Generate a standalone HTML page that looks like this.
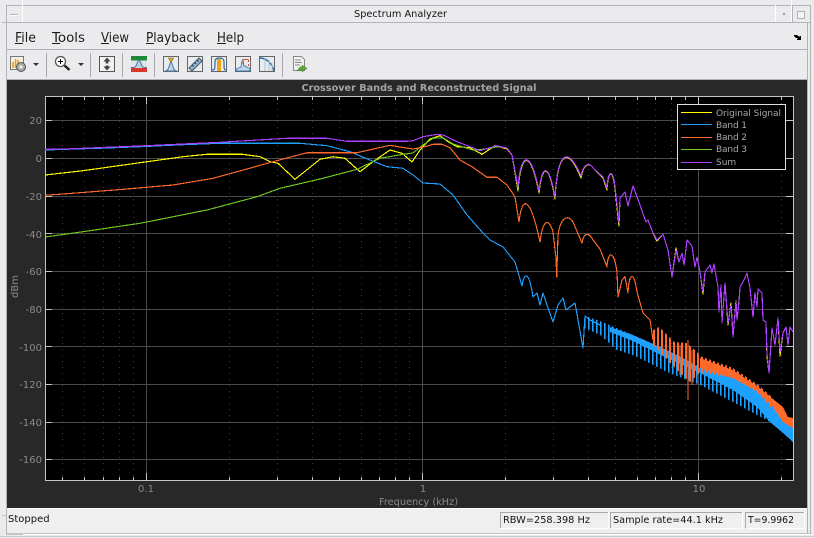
<!DOCTYPE html>
<html><head><meta charset="utf-8"><title>Spectrum Analyzer</title>
<style>
html,body{margin:0;padding:0;width:814px;height:538px;overflow:hidden;background:#ebebee}
svg{display:block}
text{font-family:"DejaVu Sans","Liberation Sans",sans-serif}
.t{fill:#8a8a8a;font-size:10px}
.m{fill:#1c1c1c;font-size:13px}
.l{fill:#a8a8a8;font-size:9px}
.s{fill:#111;font-size:10px}
</style></head><body>
<svg width="814" height="538" viewBox="0 0 814 538" xmlns="http://www.w3.org/2000/svg">
<defs>
<pattern id="pb" width="4" height="10" patternUnits="userSpaceOnUse"><rect width="1.6" height="10" fill="#1ea0ff"/></pattern>
<pattern id="po" width="4" height="10" patternUnits="userSpaceOnUse"><rect x="1" width="2" height="10" fill="#ff6a2b"/></pattern>
</defs>
<rect width="814" height="538" fill="#ebebee"/>
<!-- window frame -->
<g shape-rendering="crispEdges" fill="none">
<path d="M6 5.500H810M2 22.500H810M6.500 5V534M807.500 22V533M810.500 5V534" stroke="#b4b4b8"/>
<path d="M22.500 0V22M775.500 5V22M791.500 0V22" stroke="#fff"/>
<path d="M792.500 5V22" stroke="#b4b4b8"/>
<rect x="797.500" y="11.500" width="7" height="7" fill="#f4f4f4" stroke="#b0b0b0"/>
<path d="M10 14.500H18" stroke="#b4b4b8"/><path d="M10 15.500H18" stroke="#fff"/>
<rect x="783" y="13" width="2" height="2" fill="#999" stroke="none"/>
<path d="M7 49.500H807M7 79.500H807" stroke="#b0b0b4"/>
<path d="M46.500 53V77M90.500 53V77M122.500 53V77M154.500 53V77M282.500 53V77" stroke="#a8a8ac"/>
</g>
<text x="354" y="17" font-size="10" fill="#111" textLength="93" lengthAdjust="spacingAndGlyphs">Spectrum Analyzer</text>
<!-- menu -->
<text class="m" x="15" y="42" textLength="21" lengthAdjust="spacingAndGlyphs">File</text><rect x="15" y="43" width="8" height="1" fill="#1c1c1c"/>
<text class="m" x="52" y="42" textLength="33" lengthAdjust="spacingAndGlyphs">Tools</text><rect x="52" y="43" width="8" height="1" fill="#1c1c1c"/>
<text class="m" x="101" y="42" textLength="28" lengthAdjust="spacingAndGlyphs">View</text><rect x="101" y="43" width="8" height="1" fill="#1c1c1c"/>
<text class="m" x="146" y="42" textLength="54" lengthAdjust="spacingAndGlyphs">Playback</text><rect x="146" y="43" width="8" height="1" fill="#1c1c1c"/>
<text class="m" x="217" y="42" textLength="27" lengthAdjust="spacingAndGlyphs">Help</text><rect x="217" y="43" width="9" height="1" fill="#1c1c1c"/>
<path d="M794 35h3l1 1h1l1 1v-1h1v4h-4v-1h1l-1-1h-1l-1-1-1-1z" fill="#000"/>
<!-- toolbar icons -->
<g>
<rect x="10.500" y="56.500" width="13" height="13" fill="#f4f1e4" stroke="#777"/>
<path d="M13 68V62M15.500 68V59M18 68V60M20.500 68V63" stroke="#e8a020" stroke-width="1.600"/>
<circle cx="21" cy="67" r="4.500" fill="#a8a8a8" stroke="#555"/><circle cx="21" cy="67" r="1.600" fill="#eee"/>
<path d="M33 63h6l-3 3z" fill="#333"/>
<circle cx="60.500" cy="61.500" r="5" fill="#fff" stroke="#555" stroke-width="1.300"/>
<path d="M58 61.500h5M60.500 59v5" stroke="#111"/>
<path d="M64.500 65.500l5 4.500" stroke="#222" stroke-width="2.400"/>
<path d="M78 63h6l-3 3z" fill="#333"/>
<rect x="99.500" y="56.500" width="15" height="15" fill="#f2f2f2" stroke="#555"/>
<path d="M107 57.500l3.500 4h-2.200v2h-2.600v-2h-2.200zM107 70.500l3.500-4h-2.200v-1h-2.600v1h-2.200z" fill="#444"/>
<rect x="131" y="56" width="16" height="16" fill="#dde4ea"/>
<rect x="131" y="56" width="16" height="4.500" fill="#1d8a3a"/><rect x="131" y="68" width="16" height="4" fill="#d8382c"/>
<path d="M131 67.500h3c3 0 3-7 5-7s2 7 5 7h3" fill="#b8d0e0" stroke="#4a78a8"/>
</g>
<g fill="#e9ecef" stroke="#666" shape-rendering="crispEdges">
<rect x="163.500" y="56.500" width="15" height="15"/><rect x="187.500" y="56.500" width="15" height="15"/><rect x="211.500" y="56.500" width="15" height="15"/><rect x="235.500" y="56.500" width="15" height="15"/><rect x="259.500" y="56.500" width="15" height="15"/>
</g>
<path d="M165 71c4 0 4-6 6-10 2 4 2 10 6 10z" fill="#c0d6e6" stroke="#4a78a8"/>
<path d="M168.500 58h5l-2 4h-1z" fill="#e0a030" stroke="#8a6a20" stroke-width=".6"/>
<path d="M189 68l10-10 3 3-10 10z" fill="#8fb4d4" stroke="#456"/>
<path d="M192 65l1.500 1.500M194.500 62.500l1.500 1.500M197 60l1.500 1.500" stroke="#234"/>
<rect x="217" y="59" width="4" height="12" fill="#f0a010"/>
<path d="M212 70c3 0 3-1 3-8 0-3 2-4 4-4s5 0 5 4c0 7 0 8 2 8" fill="none" stroke="#2a6aa8" stroke-width="1.200"/>
<path d="M236 70c3-4 3-1 5-3 1-9 2-9 3-1 2-1 3 3 6 2v3h-14z" fill="#c0d6e6" stroke="#2a6aa8" stroke-width=".8"/>
<path d="M242.500 59.500h6M248.500 60v2M248.500 64v2M242 63h2" stroke="#d84a20"/>
<path d="M260 58c6 0 12 5 14 13" fill="none" stroke="#2a6aa8" stroke-width="1.400"/>
<path d="M265 58v13M269 60v11M272 63v8" stroke="#a9c2d6"/>
<path d="M293.500 56.500h8l3 3v11h-11z" fill="#f2f2ee" stroke="#888"/>
<path d="M295 60h6M295 62.500h7M295 65h5" stroke="#888"/>
<path d="M297 71l3-4h2v-2l5 3.500-5 3.500v-2h-2z" fill="#62a83a" stroke="#3c7a24" stroke-width=".5"/>
<!-- figure -->
<rect x="7" y="80" width="800" height="428" fill="#282828"/>
<rect x="7" y="508" width="800" height="1" fill="#fff"/>
<rect x="7" y="509" width="800" height="24" fill="#efefef"/>
<rect x="45" y="96" width="749" height="384" fill="#000"/>
<text x="419" y="91" text-anchor="middle" font-size="10" font-weight="700" fill="#a4a4a4" textLength="235" lengthAdjust="spacingAndGlyphs">Crossover Bands and Reconstructed Signal</text>
<!-- grid -->
<g shape-rendering="crispEdges" fill="none">
<path stroke="#3a3a3a" stroke-dasharray="1 5" d="M62.500 97V480M84.500 97V480M103.500 97V480M119.500 97V480M133.500 97V480M229.500 97V480M277.500 97V480M312.500 97V480M339.500 97V480M361.500 97V480M379.500 97V480M395.500 97V480M409.500 97V480M505.500 97V480M553.500 97V480M588.500 97V480M615.500 97V480M637.500 97V480M655.500 97V480M671.500 97V480M685.500 97V480M781.500 97V480"/>
<path stroke="#4a4a4a" d="M45 120.500H794M45 158.500H794M45 196.500H794M45 233.500H794M45 271.500H794M45 309.500H794M45 346.500H794M45 384.500H794M45 422.500H794M45 459.500H794M146.500 97V480M422.500 97V480M698.500 97V480"/>
<path stroke="#c4c4c4" d="M45.500 96.500H793.500V480.500H45.500Z"/>
<path stroke="#c4c4c4" d="M45 120.500h7M45 158.500h7M45 196.500h7M45 233.500h7M45 271.500h7M45 309.500h7M45 346.500h7M45 384.500h7M45 422.500h7M45 459.500h7M793 120.500h-7M793 158.500h-7M793 196.500h-7M793 233.500h-7M793 271.500h-7M793 309.500h-7M793 346.500h-7M793 384.500h-7M793 422.500h-7M793 459.500h-7M146.500 97v7M422.500 97v7M698.500 97v7M146.500 480v-7M422.500 480v-7M698.500 480v-7M62.500 97v3M84.500 97v3M103.500 97v3M119.500 97v3M133.500 97v3M229.500 97v3M277.500 97v3M312.500 97v3M339.500 97v3M361.500 97v3M379.500 97v3M395.500 97v3M409.500 97v3M505.500 97v3M553.500 97v3M588.500 97v3M615.500 97v3M637.500 97v3M655.500 97v3M671.500 97v3M685.500 97v3M781.500 97v3M62.500 480v-3M84.500 480v-3M103.500 480v-3M119.500 480v-3M133.500 480v-3M229.500 480v-3M277.500 480v-3M312.500 480v-3M339.500 480v-3M361.500 480v-3M379.500 480v-3M395.500 480v-3M409.500 480v-3M505.500 480v-3M553.500 480v-3M588.500 480v-3M615.500 480v-3M637.500 480v-3M655.500 480v-3M671.500 480v-3M685.500 480v-3M781.500 480v-3"/>
</g>
<!-- tick labels -->
<g class="t" text-anchor="end">
<text x="42" y="124">20</text><text x="42" y="162">0</text><text x="42" y="200">-20</text><text x="42" y="238">-40</text><text x="42" y="275">-60</text><text x="42" y="313">-80</text><text x="42" y="351">-100</text><text x="42" y="388">-120</text><text x="42" y="426">-140</text><text x="42" y="463">-160</text>
</g>
<g class="t" text-anchor="middle"><text x="146" y="492">0.1</text><text x="423" y="492">1</text><text x="699" y="492">10</text>
<text x="418.500" y="505" textLength="79" lengthAdjust="spacingAndGlyphs">Frequency (kHz)</text>
<text transform="translate(18 286.500) rotate(-90)">dBm</text></g>
<!-- traces -->
<g fill="none" stroke-width="1.150" stroke-linejoin="round" shape-rendering="crispEdges">
<path stroke="#ffff00" d="M45 175L83 170.700L140 162.700L183 156.700L207 154.300L243 154.300L260 156.700L270 161.700L278 163.300L295 179.300L320 159.300L333 156.700L345 158.300L360 171.700L373 161.700L390 150L402 153.300L412 162L420 150L430 139L440 135.700L448 141.700L457 146.700L470 147.700L482 154.300L495 145.700L507 149L512 155L518 191C521 150 531 150 539 193C542 163 549 163 555 199C558 145 570 150 581 178C584 162 590 163 593 168L603 178L607 190C608 170 613 168 615 189L619 226L620 198L625 192L628 206L633 186L640 205L646 222L648 220L653 233L657 241L663 234L668 250L672 277L676 248L679 262L682 253L684 265L687 240L692 246L695 267L697 257L700 272L703 294L705 272L710 265L712 273L714 264L718 287L719 312L721 285L722 323L725 283L728 325L731 303L733 337L736 301L737 320L739 301L740 287L744 280L747 273L750 288L753 317L755 293L757 307L758 289L762 293L763 320L766 322L767 356L769 373L772 328L775 345L778 318L780 356L783 333L786 327L788 345L790 327L793 332"/>
<path stroke="#6fc81e" d="M45 237L83 231.700L140 223.300L207 210L257 196.700L280 188.300L323 178.300L357 169.300L380 158.300L403 154.300L413 153L423 145L433 138.300L443 137.700L453 144L473 150L487 149L497 146.700L507 148L512 155L518 189C521 150 531 150 539 191C542 163 549 163 555 197C558 145 570 150 581 176"/>
<!-- low band: blue -->
<path fill="url(#pb)" stroke="none" d="M585 316L600 321L633 335L667 350L700 367L733 378L757 393L770 407L770 422L757 415L733 402L700 385L667 372L633 355L617 350L600 335L585 328Z"/>
<path fill="#1ea0ff" stroke="none" d="M610 327L633 335L667 350L683 358L700 368L733 378L757 391L773 407L783 422L793 428L793 442L783 433L770 422L757 407L733 390L700 373L667 358L633 341L610 332Z"/>
<path stroke="#1ea0ff" d="M45 150L66 149.300L107 148L140 146.700L183 144.700L220 143.300L300 143.300L327 145.700L350 151.700L370 160L387 166.700L403 168.300L413 175L423 183L440 184L453 195L467 215L483 233L490 240L503 247L515 262L522 286C524 272 529 270 533 297L537 293L540 305L543 293L547 305L553 322L558 305L563 298L566 310L575 303L583 348L585 316L590 320L600 325"/>
<!-- orange -->
<path fill="url(#po)" stroke="none" d="M653 330L659 327L667 335L674 342L687 343L697 352L700 356L733 368L757 384L773 398L773 410L757 392L733 378L700 372L690 382L675 368L660 352L653 345Z"/>
<path fill="#ff6a2b" stroke="none" d="M700 358L733 370L757 386L773 399L783 407L788 417L793 418L793 428L783 422L773 407L757 391L733 378L700 368Z"/>
<path stroke="#ff6a2b" d="M45 195.300L80 192.700L123 189.300L173 185L213 178.300L247 169L273 161.700L307 152.700L357 152.700L390 145.300L400 147L413 149L425 146.700L433 144.300L442 144.300L450 147.700L460 160L472 166.700L487 177.300L497 177.300L507 185L515 196.700L519 222C522 195 530 195 540 242C543 218 549 218 553 232L556 258L556.700 277L558 235C561 215 569 215 573 222L582 243C584 232 589 232 593 240L600 249L607 267C608 250 614 250 617 272L618 297L622 280L625 276.700L628 293C629 272 634 270 637 292L643 313L650 320L653 340M688 340V400M680 345V375M692 350V385"/>
<path stroke="#b040ff" d="M45 149.300L66 149L107 147.300L140 146L183 144L220 142.300L270 139.300L287 138.300L327 138.300L347 141.300L407 141.300L413 140.700L423 136.700L437 134.300L443 135L457 141.700L470 146.700L480 150.700L488 148.300L497 145.700L507 148.300L512 155L518 187C521 150 531 150 539 191C542 163 549 163 555 197C558 145 570 150 581 176C584 162 590 163 593 168L603 177L607 188C608 170 613 168 615 187L619 223L620 198L625 192L628 206L633 186L640 205L646 222L648 220L653 233L657 240L663 234L668 250L672 277L676 250L679 262L682 253L684 265L687 240L692 246L695 267L697 257L700 272L703 292L705 272L710 265L712 273L714 264L718 287L719 312L721 285L722 323L725 283L728 323L731 305L733 337L736 302L737 320L739 302L740 287L744 280L747 273L750 288L753 317L755 293L757 307L758 289L762 293L763 320L766 322L767 353L769 373L772 328L775 345L778 318L780 352L783 333L786 327L788 345L790 327L793 332"/>
</g>
<!-- legend -->
<rect x="677.500" y="104.500" width="108" height="65" fill="#000" stroke="#e0e0e0" shape-rendering="crispEdges"/>
<g shape-rendering="crispEdges"><rect x="681" y="112" width="31" height="1" fill="#ffff00"/><rect x="681" y="124" width="31" height="1" fill="#1ea0ff"/><rect x="681" y="137" width="31" height="1" fill="#ff6a2b"/><rect x="681" y="149" width="31" height="1" fill="#6fc81e"/><rect x="681" y="162" width="31" height="1" fill="#b040ff"/></g>
<g class="l"><text x="716" y="116" textLength="65" lengthAdjust="spacing">Original Signal</text><text x="716" y="128" textLength="31" lengthAdjust="spacing">Band 1</text><text x="716" y="140" textLength="31" lengthAdjust="spacing">Band 2</text><text x="716" y="152" textLength="31" lengthAdjust="spacing">Band 3</text><text x="716" y="165">Sum</text></g>
<!-- status -->
<text class="s" x="8" y="522">Stopped</text>
<g fill="none" shape-rendering="crispEdges">
<path stroke="#a8a8a8" d="M500.500 528V512.500H608M610.500 528V512.500H742M745.500 528V512.500H804"/>
<path stroke="#fff" d="M501 528.500H608.500V512M611 528.500H742.500V512M746 528.500H804.500V512"/>
<path stroke="#c4c4c8" d="M7 533.500H810M2 515.500H6M6 534.500H23"/>
<path stroke="#fff" d="M23 534.500H810"/>
<path stroke="#c8c8cc" d="M0 536.500H814"/>
</g>
<text class="s" x="503" y="523" textLength="87" lengthAdjust="spacingAndGlyphs">RBW=258.398 Hz</text>
<text class="s" x="613" y="523" textLength="110" lengthAdjust="spacingAndGlyphs">Sample rate=44.1 kHz</text>
<text class="s" x="748" y="523" textLength="46" lengthAdjust="spacingAndGlyphs">T=9.9962</text>
</svg>
</body></html>
